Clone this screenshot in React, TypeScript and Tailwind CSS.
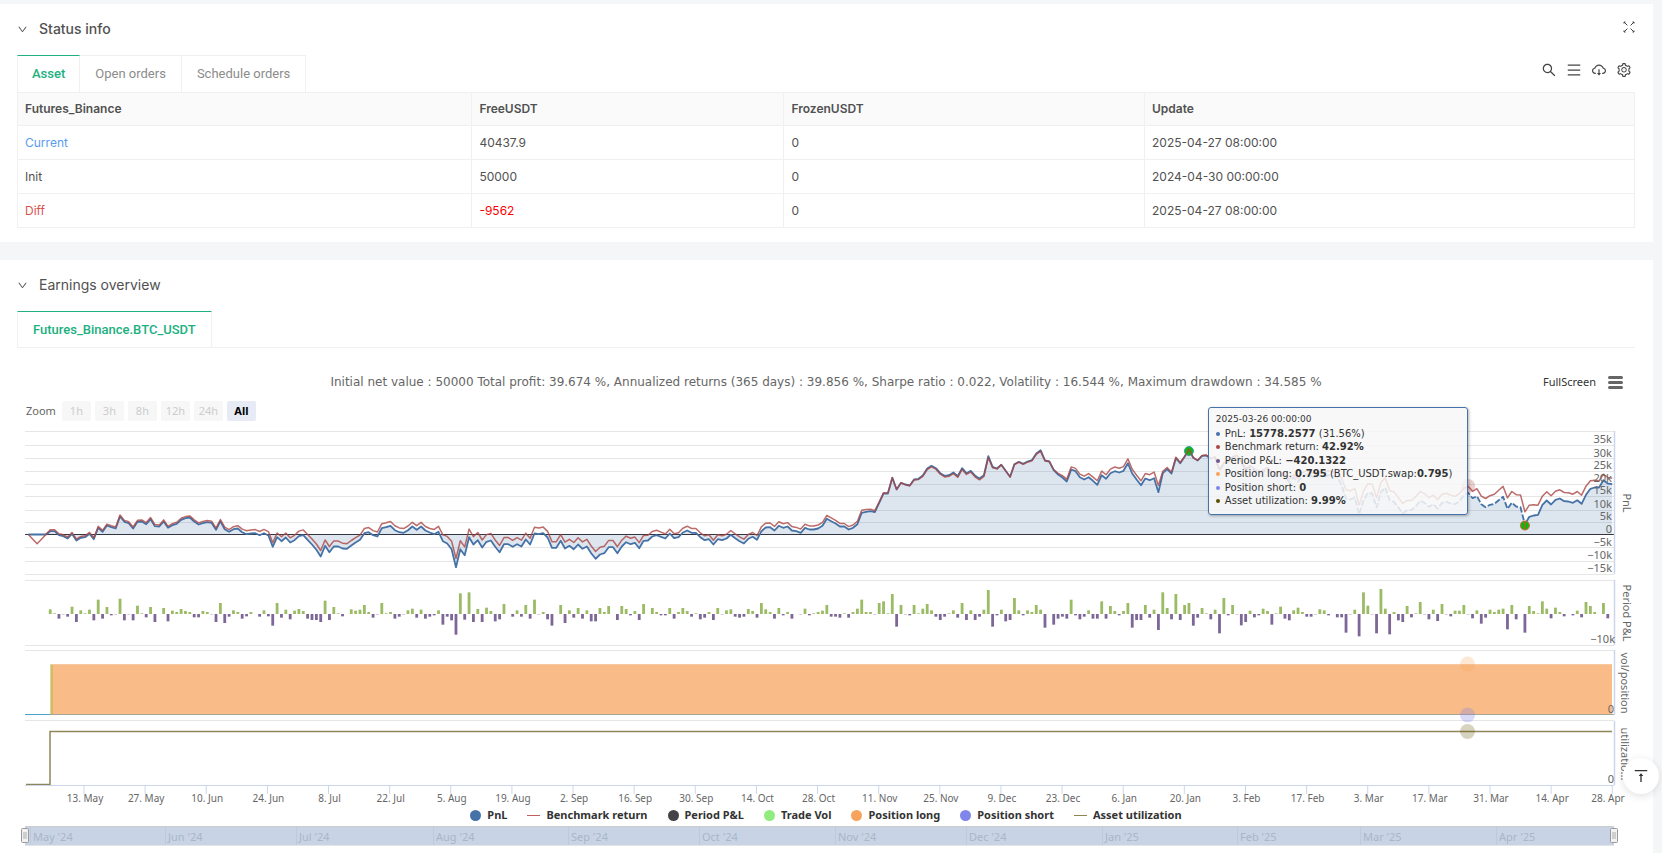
import { AiOutlineCloudDownload, AiOutlineDown, AiOutlineMenu, AiOutlineSearch, AiOutlineSetting, AiOutlineVerticalAlignTop } from 'react-icons/ai';

const CHART_FONT = "font-['Noto_Sans',sans-serif]";

/* ── Account table ──────────────────────────────────────────────────────── */
const COLUMNS = ['Futures_Binance', 'FreeUSDT', 'FrozenUSDT', 'Update'];

const ROWS = [
  { name: 'Current', tone: 'text-[#5a9cf0]', free: '40437.9', freeTone: '', frozen: '0', update: '2025-04-27 08:00:00' },
  { name: 'Init', tone: '', free: '50000', freeTone: '', frozen: '0', update: '2024-04-30 00:00:00' },
  { name: 'Diff', tone: 'text-[#d9544f]', free: '-9562', freeTone: 'text-[#ff0000]', frozen: '0', update: '2025-04-27 08:00:00' },
];

/* ── Series, one value per day, 1 unit = a third of a chart unit ────────── */
const PNL = [
  0, 0, 0, 0, 0, 10, 10, -2, -5, -12, 2, -18, -10, -8, 2, -14, 20, 8, 27, 22, 18, 54, 38, 34, 18, 38, 39, 31, 46, 25,
  24, 39, 20, 28, 32, 44, 49, 51, 39, 30, 34, 37, 35, 14, 40, 16, 8, 16, 18, 7, 1, 3, 4, -2, 4, -3, -37, -8, -20, -9,
  -24, -17, -5, -2, -16, -30, -46, -66, -34, -53, -36, -36, -42, -43, -33, -24, -16, 4, 7, -2, -6, 19, 22, 26, 13, 7, 5, 13, 24, 14,
  24, 12, 6, 1, 8, -20, -27, -44, -98, -44, -62, -8, -30, -17, -39, -22, -18, -37, -53, -29, -29, -37, -29, -36, -15, -30, 3, 1, 4, -9,
  -40, -40, -19, -42, -34, -44, -30, -43, -36, -56, -73, -60, -56, -38, -38, -56, -36, -23, -29, -25, -41, -19, -18, -6, -2, -7, -12, 3, -11, -8,
  6, 12, 5, 5, -8, -17, -14, -30, -14, -17, -12, -1, -11, -20, -27, -13, -7, -16, 10, 21, 22, 12, 26, 20, 24, 12, 10, 5, 20, 15,
  15, 18, 26, 47, 40, 33, 24, 24, 15, 20, 31, 65, 68, 70, 67, 95, 123, 123, 170, 135, 155, 150, 147, 165, 167, 177, 198, 206, 199, 184,
  176, 178, 186, 175, 199, 184, 191, 176, 168, 178, 235, 203, 198, 209, 191, 173, 211, 218, 212, 219, 223, 243, 253, 222, 219, 193, 180, 171, 159, 195,
  190, 172, 165, 172, 161, 149, 178, 167, 184, 190, 186, 191, 214, 183, 165, 148, 168, 163, 169, 127, 184, 196, 183, 229, 214, 233, 256, 230, 222, 236,
  237, 227, 231, 193, 213, 218, 231, 235, 218, 193, 203, 193, 185, 188, 195, 181, 175, 181, 173, 158, 171, 158, 175, 181, 175, 171, 177, 173, 178, 175,
  173, 148, 108, 105, 111, 61, 103, 125, 123, 81, 128, 141, 103, 98, 81, 63, 73, 73, 85, 101, 95, 83, 91, 78, 95, 98, 93, 91, 101, 118,
  125, 109, 115, 91, 82, 89, 92, 103, 113, 77, 95, 84, 82, 30, 53, 57, 59, 89, 102, 90, 104, 108, 100, 99, 95, 103, 92, 119, 137, 141,
  141, 163, 153, 151,
];

const PERIOD = [
  0, 0, 0, 0, 0, 14, 2, -14, -1, -8, 22, -24, 11, 2, 13, -19, 43, -14, 21, -4, -1, 46, -19, -1, -19, 25, 2, -10, 21, -24,
  0, 18, -22, 10, 6, 15, 9, 6, -10, -10, 9, 6, -1, -24, 33, -27, -8, 11, 6, -14, -7, 6, 0, -8, 11, -7, -35, 33, -11, 13,
  -16, 10, 15, 9, -14, -18, -18, -24, 40, -18, 21, 2, -7, 0, 14, 10, 13, 27, 6, -11, -1, 33, 2, 6, -14, -8, -1, 11, 16, -11,
  13, -14, -8, -4, 11, -32, -8, -19, -62, 62, -17, 65, -24, 15, -24, 19, 9, -22, -16, 30, 0, -8, 11, -8, 27, -14, 43, -1, 6, -16,
  -35, 0, 27, -27, 11, -11, 18, -14, 11, -22, -22, 18, 6, 24, 0, -18, 24, 15, -4, 9, -18, 30, 0, 18, 6, -4, -4, 18, -14, 6,
  18, 9, -8, 2, -16, -11, 6, -18, 18, -1, 11, 14, -8, -11, -8, 15, 9, -11, 33, 14, 6, -14, 18, -4, 6, -14, 0, -1, 16, -4,
  2, 6, 10, 27, -8, -8, -11, 2, -11, 6, 16, 43, 6, 6, -1, 33, 38, 2, 60, -38, 27, -1, -4, 27, 2, 16, 30, 11, -8, -18,
  -8, 2, 11, -11, 33, -18, 11, -18, -8, 13, 72, -38, -4, 13, -22, -18, 48, 11, -4, 11, 6, 27, 13, -41, 0, -32, -14, -8, -14, 43,
  -4, -16, -8, 11, -14, -14, 38, -14, 24, 9, -4, 9, 33, -41, -18, -18, 27, -11, 13, -48, 65, 18, -16, 60, -18, 27, 33, -35, -11, 18,
  2, -16, 13, -58, 48, -4, 27, -1, -34, -24, 10, -10, -4, 16, 9, -32, 2, 22, -14, -19, 11, 19, 6, -8, -8, -1, 14, 11, -4, 0,
  -10, -10, -56, -1, 13, -67, 65, 25, -1, -58, 75, 16, -61, 6, -19, -24, 24, -10, 2, 36, -1, -16, 13, -21, 30, -1, -7, 10, 10, 27,
  -1, -13, 11, -29, -11, 13, 6, 13, 16, -46, 27, -16, 0, -56, 24, 9, 2, 38, 16, -13, 19, 6, -7, 0, -4, 10, -10, 36, 24, 6,
  0, 33, -13,
];

// [day, benchmark minus PnL], linear in between
const SPREAD = [
  [0, 0], [1, -14], [2, -28], [3, -14], [4, 0], [5, 4], [44, 5], [50, 10], [56, 12], [67, 18], [76, 14], [92, 12], [98, 26],
  [108, 20], [120, 18], [130, 22], [147, 13], [168, 13], [183, 10], [191, 8], [196, 2], [206, -3], [220, -4], [223, 0], [232, -3],
  [238, 7], [245, 12], [255, 13], [259, 20], [260, 6], [266, 0], [280, 4], [300, 14], [302, 26], [315, 30], [326, 25], [330, 19],
  [334, 26], [343, 38], [347, 26], [357, 26], [361, 18], [363, 18],
];

const spreadAt = (day: number) => {
  const next = SPREAD.findIndex(([d]) => d >= day);
  if (next <= 0) return SPREAD[0][1];
  const [d0, v0] = SPREAD[next - 1];
  const [d1, v1] = SPREAD[next];
  return v0 + ((v1 - v0) * (day - d0)) / (d1 - d0);
};

const ZERO = 109.5;
const xAt = (day: number) => 11.4 + day * 4.363;
const yAt = (v: number) => ZERO - v / 3;
const toPoints = (values: number[], from = 0) =>
  values.map((v, i) => `${xAt(i + from).toFixed(1)},${yAt(v).toFixed(1)}`).join(' ');

const BENCHMARK = PNL.map((v, i) => v + spreadAt(i));
const PEAK = 270;
const TROUGH = 343;

const GRID = [6.5, 20.5, 33.5, 46.5, 59.5, 71.5, 85.5, 97.5, 122.5, 136.5, 149.5, 155.5, 220.5, 225.5, 295.5];
const PANES = [[6, 149], [155, 220], [225, 290], [296, 360]];

const PNL_LABELS = [
  ['35k', 18], ['30k', 32], ['25k', 44], ['20k', 57], ['15k', 69], ['10k', 83],
  ['5k', 95], ['0', 108], ['−5k', 121], ['−10k', 134], ['−15k', 147],
] as const;

const DATES = [
  '13. May', '27. May', '10. Jun', '24. Jun', '8. Jul', '22. Jul', '5. Aug', '19. Aug', '2. Sep', '16. Sep', '30. Sep', '14. Oct', '28. Oct',
  '11. Nov', '25. Nov', '9. Dec', '23. Dec', '6. Jan', '20. Jan', '3. Feb', '17. Feb', '3. Mar', '17. Mar', '31. Mar', '14. Apr', '28. Apr',
];

const MONTHS = [
  ["May '24", 16], ["Jun '24", 151], ["Jul '24", 282], ["Aug '24", 419], ["Sep '24", 554], ["Oct '24", 685],
  ["Nov '24", 821], ["Dec '24", 952], ["Jan '25", 1088], ["Feb '25", 1223], ["Mar '25", 1346], ["Apr '25", 1482],
] as const;

const RANGES = ['1h', '3h', '8h', '12h', '24h'];

const LEGEND = [
  { label: 'PnL', color: '#4572a7', dot: true },
  { label: 'Benchmark return', color: '#c0605e', dot: false },
  { label: 'Period P&L', color: '#434348', dot: true },
  { label: 'Trade Vol', color: '#90ed7d', dot: true },
  { label: 'Position long', color: '#f7a35c', dot: true },
  { label: 'Position short', color: '#8085e9', dot: true },
  { label: 'Asset utilization', color: '#8d8653', dot: false },
];

function ShrinkIcon() {
  return (
    <svg width="12" height="12" viewBox="0 0 12 12" fill="none" stroke="#444" strokeWidth="1">
      <path d="M1 2.5V1h1.5M1 1l3.4 3.4M9.5 1H11v1.5M11 1 7.6 4.4M1 9.5V11h1.5M1 11l3.4-3.4M11 9.5V11H9.5M11 11 7.6 7.6" />
    </svg>
  );
}

function Chart() {
  return (
    <svg viewBox="0 0 1618 382" className="block w-full overflow-visible" fontSize="11" fill="#666">
      {GRID.map(y => <path key={y} d={`M8 ${y}H1597`} stroke="#e6e6e6" />)}

      {/* PnL pane */}
      <polygon points={`${xAt(0)},${ZERO} ${toPoints(PNL)} ${xAt(363)},${ZERO}`} fill="#4572a7" fillOpacity="0.18" />
      <path d={`M8 ${ZERO}H1597`} stroke="#333640" />
      <g fill="none" stroke="#4572a7" strokeWidth="1.8" strokeLinejoin="round">
        <polyline points={toPoints(PNL.slice(0, PEAK + 1))} />
        <polyline points={toPoints(PNL.slice(PEAK, TROUGH + 1), PEAK)} strokeDasharray="6 2" />
        <polyline points={toPoints(PNL.slice(TROUGH), TROUGH)} />
      </g>
      <circle cx={xAt(266)} cy="26" r="4.5" fill="#0cb90c" stroke="#3d9dab" />
      <circle cx={xAt(343)} cy="100.5" r="4.5" fill="#0cb90c" stroke="#e0603c" />
      <polyline points={toPoints(BENCHMARK)} fill="none" stroke="#aa4643" strokeOpacity="0.8" strokeWidth="1.5" strokeLinejoin="round" />
      <path d={`M${xAt(343)} 97v7`} stroke="#d2532f" strokeWidth="1.2" />
      <circle cx={xAt(330)} cy="61" r="7" fill="#aa4643" fillOpacity="0.25" />

      {/* Period P&L pane */}
      {PERIOD.map((v, i) => v !== 0 && (
        <rect
          key={i}
          x={xAt(i) - 1.4} y={v > 0 ? 189 - v / 3 : 189}
          width="2.8" height={Math.abs(v) / 3}
          fill={v > 0 ? '#9bbb64' : '#7d6797'}
        />
      ))}

      {/* Volume / position pane */}
      <rect x="33" y="239" width="1562" height="50" fill="#f9bb87" />
      <path d="M33 239.5H1595" stroke="#f7c9a0" />
      <path d="M33.5 239v50" stroke="#b5e89b" />
      <path d="M35 240v49" stroke="#e2b464" strokeWidth="2" />
      <path d="M8 289.5H33" stroke="#4aa3d0" />
      <path d="M33 289.5H1597" stroke="#a9a394" />
      <circle cx="1450.5" cy="239" r="7.5" fill="#f7a35c" fillOpacity="0.25" />
      <circle cx="1450.5" cy="290" r="7.5" fill="#8085e9" fillOpacity="0.3" />

      {/* Utilization pane */}
      <path d="M9 359.5H33V306.5H1595" fill="none" stroke="#8f8757" strokeWidth="1.5" />
      <circle cx="1450.5" cy="306.5" r="7.5" fill="#5c5000" fillOpacity="0.25" />
      <path d="M8 360.5H1597" stroke="#ccd6eb" />

      {PANES.map(([a, b]) => <path key={a} d={`M1597.5 ${a}V${b}`} stroke="#ccd6eb" strokeWidth="1.5" />)}

      {/* Axis labels */}
      <g textAnchor="end">
        {PNL_LABELS.map(([label, y]) => <text key={label} x="1595" y={y}>{label}</text>)}
        <text x="1598" y="218">−10k</text>
        <text x="1597" y="288">0</text>
        <text x="1597" y="358">0</text>
      </g>
      <g textAnchor="middle">
        <text transform="translate(1606 78) rotate(90)">PnL</text>
        <text transform="translate(1606 188) rotate(90)">Period P&amp;L</text>
        <text transform="translate(1604 258) rotate(90)">vol/position</text>
        <text transform="translate(1604 329) rotate(90)">utilizatio...</text>
      </g>
      <g textAnchor="middle" fontSize="10">
        {DATES.map((date, i) => {
          const x = 67 + i * 61.13;
          return (
            <g key={date}>
              <path d={`M${x} 361v8`} stroke="#ccd6eb" />
              <text x={i === 25 ? 1591 : x + 1} y="377">{date}</text>
            </g>
          );
        })}
      </g>
    </svg>
  );
}

function Bullet({ color }: { color: string }) {
  return <span className="mr-[5px] inline-block size-1 rounded-full align-middle" style={{ backgroundColor: color }} />;
}

function Tooltip() {
  return (
    <div className="absolute left-[73.6%] -top-[18px] flex h-[108px] w-[260px] flex-col justify-between rounded-[3px] border border-[#4572a7] bg-[#f7f7f7]/85 px-[7px] pt-[5px] pb-[7px] font-['DejaVu_Sans',sans-serif] text-[10px] leading-[13px] whitespace-nowrap text-[#333] shadow-[1px_1px_3px_rgba(0,0,0,0.3)]">
      <p className="h-[13px] text-[9px]">2025-03-26 00:00:00</p>
      <p className="h-[13px]"><Bullet color="#4572a7" />PnL: <b>15778.2577</b> (31.56%)</p>
      <p className="h-[13px]"><Bullet color="#aa4643" />Benchmark return: <b>42.92%</b></p>
      <p className="h-[13px]"><Bullet color="#71588f" />Period P&amp;L: <b>−420.1322</b></p>
      <p className="h-[13px]"><Bullet color="#f7a35c" />Position long: <b>0.795</b> (BTC_USDT.swap:<b>0.795</b>)</p>
      <p className="h-[13px]"><Bullet color="#8085e9" />Position short: <b>0</b></p>
      <p className="h-[13px]"><Bullet color="#5c5000" />Asset utilization: <b>9.99%</b></p>
    </div>
  );
}

function Navigator() {
  return (
    <svg viewBox="0 0 1618 20" className="block w-full overflow-visible" fontSize="11">
      <rect x="8" y="0.5" width="1589" height="19" fill="#c8d4e5" />
      <path d="M8 0.5H1597" stroke="#ccc" />
      <path d="M8 19.5H1597" stroke="#e4e4e4" />
      {MONTHS.map(([label, x]) => (
        <g key={label}>
          <path d={`M${x - 2.5} 1V19`} stroke="#bccadc" />
          <text x={x} y="15" fill="#a9b6c7">{label}</text>
        </g>
      ))}
      {[8, 1597].map(x => (
        <g key={x} stroke="#999">
          <rect x={x - 3.5} y="2.5" width="7" height="14" rx="1" fill="#f2f2f2" />
          <path d={`M${x - 1} 6v7M${x + 1} 6v7`} strokeWidth="0.8" />
        </g>
      ))}
    </svg>
  );
}

export default function App() {
  return (
    <main className="min-h-screen bg-[#f4f6f8] pt-1 pr-[9px] font-['Inter',sans-serif] text-[#515151]">

      {/* ── Status info ──────────────────────────────────────────────────── */}
      <section className="bg-white pt-[15px] pr-[18px] pb-[14px] pl-[17px]">
        <header className="flex items-start justify-between">
          <h2 className="flex items-center gap-[11px] text-[14px] leading-5 font-medium">
            <button type="button" aria-label="Collapse"><AiOutlineDown size={11} /></button>
            Status info
          </h2>
          <button type="button" aria-label="Shrink" className="mt-[2px]"><ShrinkIcon /></button>
        </header>

        <div className="mt-4 flex items-start justify-between">
          <div role="tablist" className="flex font-['Roboto',sans-serif] text-[13px]">
            <button role="tab" aria-selected className="h-[37px] border-x border-t border-[#f0f0f0] border-t-[#20b080] px-[14px] font-medium text-[#20b080]">Asset</button>
            <button role="tab" className="h-[37px] border-t border-r border-[#f0f0f0] px-[15px] text-[#8c8c8c]">Open orders</button>
            <button role="tab" className="h-[37px] border-t border-r border-[#f0f0f0] px-[15px] text-[#8c8c8c]">Schedule orders</button>
          </div>
          <div className="mt-[7px] mr-[3px] flex gap-[9px] text-[#444]">
            <button type="button" aria-label="Search"><AiOutlineSearch size={16} /></button>
            <button type="button" aria-label="Columns"><AiOutlineMenu size={16} /></button>
            <button type="button" aria-label="Download"><AiOutlineCloudDownload size={16} /></button>
            <button type="button" aria-label="Settings"><AiOutlineSetting size={16} /></button>
          </div>
        </div>

        <table className="w-full table-fixed border-collapse text-left text-[12px]">
          <colgroup>
            <col className="w-[28.1%]" />
            <col className="w-[19.3%]" />
            <col className="w-[22.3%]" />
            <col />
          </colgroup>
          <thead>
            <tr className="h-[33px] bg-[#fafafa]">
              {COLUMNS.map(name => (
                <th key={name} className="border border-[#f0f0f0] px-[7px] font-semibold">{name}</th>
              ))}
            </tr>
          </thead>
          <tbody>
            {ROWS.map(row => (
              <tr key={row.name} className="h-[34px]">
                <td className={`border border-[#f0f0f0] px-[7px] ${row.tone}`}>{row.name}</td>
                <td className={`border border-[#f0f0f0] px-[7px] ${row.freeTone}`}>{row.free}</td>
                <td className="border border-[#f0f0f0] px-[7px]">{row.frozen}</td>
                <td className="border border-[#f0f0f0] px-[7px]">{row.update}</td>
              </tr>
            ))}
          </tbody>
        </table>
      </section>

      {/* ── Earnings overview ────────────────────────────────────────────── */}
      <section className="mt-[18px] bg-white pt-[15px] pr-[18px] pb-2 pl-[17px]">
        <h2 className="flex items-center gap-[11px] text-[14px] leading-5">
          <button type="button" aria-label="Collapse"><AiOutlineDown size={11} /></button>
          Earnings overview
        </h2>

        <div role="tablist" className="mt-4 flex border-b border-[#f0f0f0] font-['Roboto',sans-serif] text-[13px]">
          <button role="tab" aria-selected className="h-[36px] border-x border-t border-[#f0f0f0] border-t-[#20b080] px-[15px] font-medium text-[#20b080]">
            Futures_Binance.BTC_USDT
          </button>
        </div>

        <div className={CHART_FONT}>
          <div className="mt-6 grid grid-cols-[1fr_auto_1fr] items-center">
            <h3 className="col-start-2 font-['DejaVu_Sans',sans-serif] text-[12px] leading-5 text-[#666]">
              Initial net value : 50000 Total profit: 39.674 %, Annualized returns (365 days) : 39.856 %, Sharpe ratio : 0.022, Volatility : 16.544 %, Maximum drawdown : 34.585 %
            </h3>
            <div className="mr-3 flex items-center justify-end gap-3 text-[11px] text-[#333]">
              <button type="button">FullScreen</button>
              <button type="button" aria-label="Chart menu" className="flex flex-col gap-[2px]">
                <i className="h-[3px] w-[15px] rounded-full bg-[#666]" />
                <i className="h-[3px] w-[15px] rounded-full bg-[#666]" />
                <i className="h-[3px] w-[15px] rounded-full bg-[#666]" />
              </button>
            </div>
          </div>

          <div className="mt-[9px] ml-[9px] flex h-5 items-center gap-1 text-[11px] text-[#666]">
            <span className="mr-[2px]">Zoom</span>
            {RANGES.map(range => (
              <button key={range} type="button" disabled className="h-5 w-[29px] rounded-[2px] bg-[#f7f7f7] text-[#ccc]">{range}</button>
            ))}
            <button type="button" className="h-5 w-[29px] rounded-[2px] bg-[#e6ebf5] font-bold text-black">All</button>
          </div>

          <div className="relative mt-1">
            <Chart />
            <Tooltip />
          </div>

          <ul className="mb-[2px] flex h-[17px] items-center justify-center gap-5 text-[11px] font-bold text-[#333]">
            {LEGEND.map(({ label, color, dot }) => (
              <li key={label}>
                <button type="button" className="flex items-center gap-[6px]">
                  <i className={dot ? 'size-[11px] rounded-full' : 'h-px w-[13px]'} style={{ backgroundColor: color }} />
                  {label}
                </button>
              </li>
            ))}
          </ul>

          <Navigator />
        </div>
      </section>

      <button type="button" aria-label="Back to top" className="fixed right-[3px] bottom-[59px] flex size-9 items-center justify-center rounded-full bg-white text-[#333] shadow-[0_2px_8px_rgba(0,0,0,0.12)]">
        <AiOutlineVerticalAlignTop size={18} />
      </button>
    </main>
  );
}
